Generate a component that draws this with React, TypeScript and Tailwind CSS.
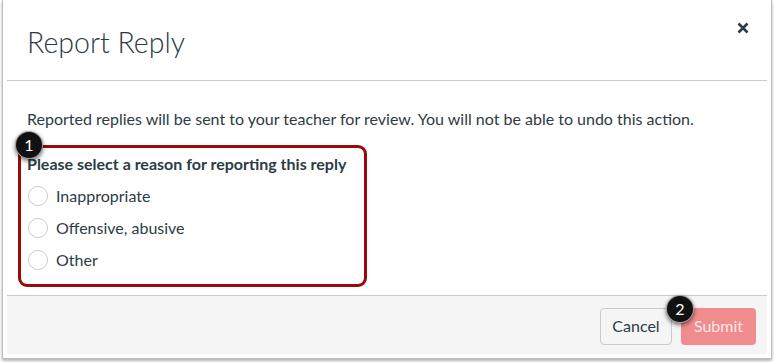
import { useState } from 'react'

const reasons = ['Inappropriate', 'Offensive, abusive', 'Other']

function Badge({ n, className }: { n: number; className: string }) {
  return (
    <div
      className={`absolute w-[28px] h-[28px] rounded-full bg-[#111] text-white text-[16px] flex items-center justify-center shadow-[0_2px_4px_rgba(0,0,0,0.55)] border border-white/60 ${className}`}
    >
      {n}
    </div>
  )
}

export default function App() {
  const [reason, setReason] = useState<string | null>(null)

  return (
    <div
      className="w-[774px] h-[362px] bg-white pl-[2px] pr-[2px] pb-[3px] text-[#2d3b45]"
      style={{ fontFamily: 'Lato, "Open Sans", sans-serif' }}
    >
      <div className="h-full flex flex-col bg-white border-x border-b border-[#bdbdbd] shadow-[0_2px_3px_rgba(0,0,0,0.3)] px-[4px] pb-[4px]">
        {/* Header */}
        <div className="h-[81px] shrink-0 flex justify-between border-b border-[#c7cdd1]">
          <h1 className="pl-[20px] pt-[26px] text-[28.5px] font-light leading-[32px]">Report Reply</h1>
          <button className="mt-[22px] mr-[18px] h-[12px] w-[12px]" aria-label="Close">
            <svg viewBox="0 0 12 12" className="w-[12px] h-[12px]">
              <path d="M1.5 1.5 L10.5 10.5 M10.5 1.5 L1.5 10.5" stroke="#2d3b45" strokeWidth="2.6" />
            </svg>
          </button>
        </div>

        {/* Body */}
        <div className="flex-1 px-[20px] pt-[26px]">
          <p className="text-[16px] leading-[24px]">
            Reported replies will be sent to your teacher for review. You will not be able to undo this action.
          </p>
          <div className="relative mt-[14px] ml-[-9px] w-[349px] h-[142px] border-[3px] border-[#9a0a0a] rounded-[9px] pl-[6px] pt-[4px]">
            <Badge n={1} className="left-[-6px] top-[-17px]" />
            <div className="text-[16px] font-bold leading-[24px] mb-[4px]">
              Please select a reason for reporting this reply
            </div>
            {reasons.map((r) => (
              <label key={r} className="h-[32px] flex items-center gap-[8px] text-[16px] cursor-pointer" onClick={() => setReason(r)}>
                <span className="w-[20px] h-[20px] ml-[1px] rounded-full border border-[#c7cdd1] bg-white flex items-center justify-center">
                  {reason === r && <span className="w-[10px] h-[10px] rounded-full bg-[#2d3b45]" />}
                </span>
                {r}
              </label>
            ))}
          </div>
        </div>

        {/* Footer */}
        <div className="h-[59px] shrink-0 bg-[#f5f5f5] border-t border-[#c7cdd1] flex items-center justify-end gap-[9px] pr-[11px] pt-[2px]">
          <button className="w-[72px] h-[37px] rounded-[4px] border border-[#c7cdd1] bg-[#f5f5f5] text-[16px] text-[#2d3b45]">
            Cancel
          </button>
          <div className="relative">
            <Badge n={2} className="left-[-15px] top-[-13px] z-10" />
            <button className="w-[75px] h-[37px] rounded-[4px] bg-[#f08c8e] text-[16px] text-[#fce6e6]">
              Submit
            </button>
          </div>
        </div>
      </div>
    </div>
  )
}
